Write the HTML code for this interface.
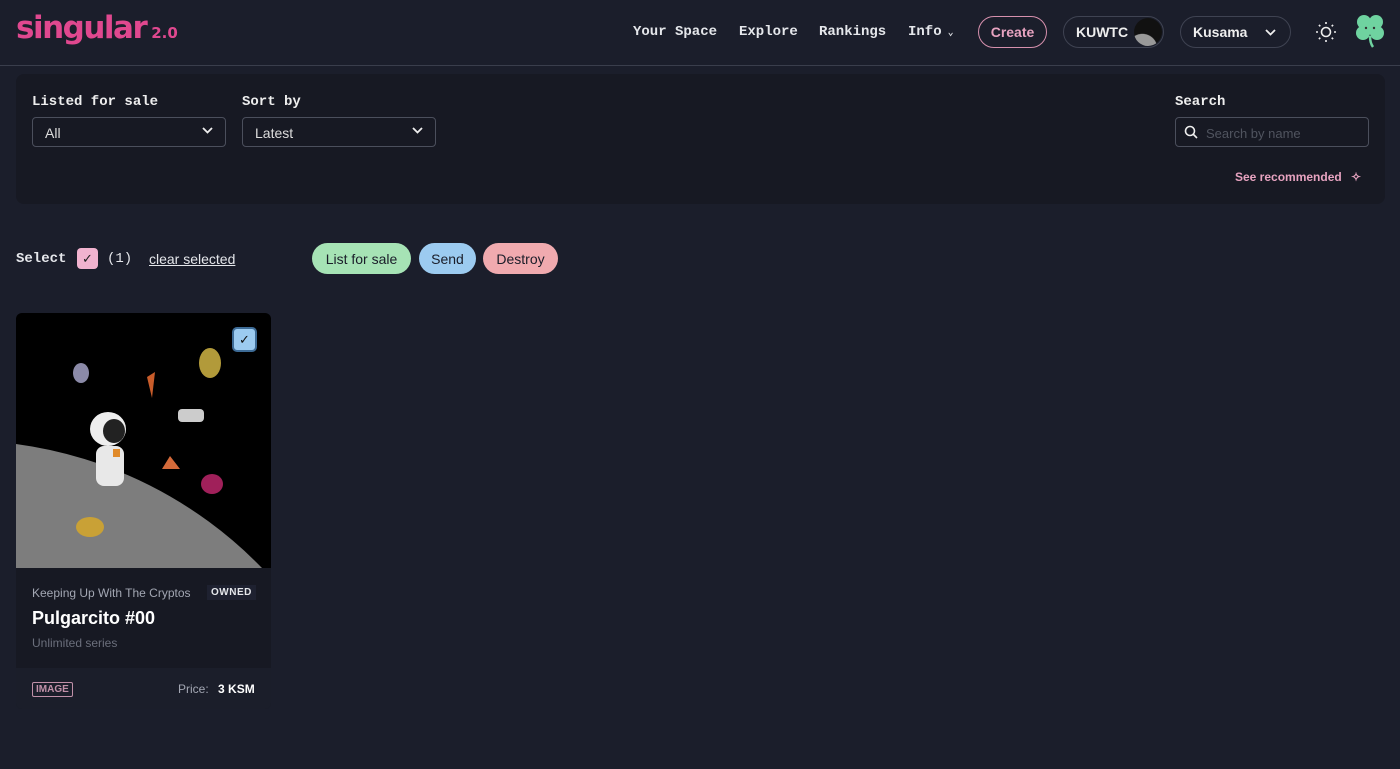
<!DOCTYPE html>
<html><head><meta charset="utf-8"><style>
*{box-sizing:border-box;margin:0;padding:0}
body{width:1400px;height:769px;background:#1b1e2b;font-family:"Liberation Sans",sans-serif;color:#e5e7eb;position:relative;overflow:hidden}
.mono{font-family:"Liberation Mono",monospace;font-weight:bold}
.hdr{position:absolute;left:0;top:0;width:1400px;height:66px;border-bottom:1px solid #3a3e4c}
.logo{position:absolute;left:16px;top:10px;font-family:"DejaVu Sans",sans-serif;font-weight:bold;color:#e0488f;font-size:31px;letter-spacing:-1.5px}
.logo small{font-size:15px;margin-left:5px;letter-spacing:0}
.nav{position:absolute;top:24px;font-size:14px;color:#e5e7eb}
.pill{position:absolute;border-radius:20px;height:32px;top:16px;font-size:14px;font-weight:bold;display:flex;align-items:center}
.panel{position:absolute;left:16px;top:74px;width:1369px;height:130px;background:#171923;border-radius:8px}
.lbl{position:absolute;top:94px;font-size:14px;color:#eee}
.sel{position:absolute;top:117px;height:30px;border:1px solid #4b4f5c;border-radius:4px;font-size:14px;padding:7px 12px;color:#ddd}
.chev{position:absolute;right:12px;top:9px}
.btn{position:absolute;top:243px;height:31px;border-radius:16px;color:#1a1d29;font-size:14px;display:flex;align-items:center;justify-content:center}
.card{position:absolute;left:16px;top:313px;width:255px;height:396px;background:#171923;border-radius:6px;overflow:hidden}
</style></head><body>
<div class="hdr">
<div class="logo">singular<small>2.0</small></div>
<div class="nav mono" style="left:633px">Your Space</div>
<div class="nav mono" style="left:739px">Explore</div>
<div class="nav mono" style="left:819px">Rankings</div>
<div class="nav mono" style="left:908px">Info<span style="font-size:10px"> ⌄</span></div>
<div class="pill" style="left:978px;width:69px;border:1.5px solid #d690ad;color:#e7a3c0;justify-content:center">Create</div>
<div class="pill" style="left:1063px;width:101px;border:1px solid #3f4352;color:#eee;padding-left:12px">KUWTC
<div style="position:absolute;right:1px;top:1px;width:28px;height:28px;border-radius:50%;background:radial-gradient(circle at 30% 110%,#999 40%,#111 42%)"></div></div>
<div class="pill" style="left:1180px;width:111px;border:1px solid #3f4352;color:#eee;padding-left:12px">Kusama
<svg style="position:absolute;right:14px;top:12px" width="11" height="7"><path d="M1 1l4.5 4.5L10 1" stroke="#eee" stroke-width="1.8" fill="none"/></svg></div>
<svg style="position:absolute;left:1315px;top:21px" width="22" height="22" viewBox="0 0 22 22" stroke="#eee" stroke-width="1.6" fill="none"><circle cx="11" cy="11" r="4.5"/><path d="M11 1v2M11 19v2M1 11h2M19 11h2M3.9 3.9l1.4 1.4M16.7 16.7l1.4 1.4M3.9 18.1l1.4-1.4M16.7 5.3l1.4-1.4"/></svg>
<svg style="position:absolute;left:1355px;top:14px" width="30" height="34" viewBox="0 0 30 34"><g fill="#6fd3a0"><circle cx="9" cy="8" r="7"/><circle cx="21" cy="8" r="7"/><circle cx="8" cy="19" r="7"/><circle cx="22" cy="19" r="7"/><rect x="8" y="8" width="14" height="12"/></g><path d="M15 22q0 7 3 11" stroke="#6fd3a0" stroke-width="2.5" fill="none"/><circle cx="11" cy="14" r="1.2" fill="#333"/><circle cx="19" cy="14" r="1.2" fill="#333"/></svg>
</div>
<div class="panel"></div>
<div class="lbl mono" style="left:32px">Listed for sale</div>
<div class="lbl mono" style="left:242px">Sort by</div>
<div class="lbl mono" style="left:1175px">Search</div>
<div class="sel" style="left:32px;width:194px">All<svg class="chev" width="11" height="7"><path d="M1 1l4.5 4.5L10 1" stroke="#eee" stroke-width="1.8" fill="none"/></svg></div>
<div class="sel" style="left:242px;width:194px">Latest<svg class="chev" width="11" height="7"><path d="M1 1l4.5 4.5L10 1" stroke="#eee" stroke-width="1.8" fill="none"/></svg></div>
<div class="sel" style="left:1175px;width:194px;padding-left:30px;color:#50545f;font-size:13px;padding-top:8px">Search by name
<svg style="position:absolute;left:8px;top:7px" width="14" height="14"><circle cx="6" cy="6" r="4.5" stroke="#eee" stroke-width="1.6" fill="none"/><path d="M9.5 9.5l3.5 3.5" stroke="#eee" stroke-width="1.6"/></svg></div>
<div style="position:absolute;left:1235px;top:170px;font-size:12px;font-weight:bold;color:#e7a3c0">See recommended <span style="margin-left:6px">✧</span></div>
<div class="mono" style="position:absolute;left:16px;top:251px;font-size:14px">Select</div>
<div style="position:absolute;left:77px;top:248px;width:21px;height:21px;border-radius:4px;background:#f1b3cf;color:#222;font-size:13px;text-align:center;line-height:21px">✓</div>
<div class="mono" style="position:absolute;left:107px;top:251px;font-size:14px;font-weight:normal">(1)</div>
<div style="position:absolute;left:149px;top:251px;font-size:14px;text-decoration:underline">clear selected</div>
<div class="btn" style="left:312px;width:99px;background:#a6e3b5">List for sale</div>
<div class="btn" style="left:419px;width:57px;background:#9ccbf0">Send</div>
<div class="btn" style="left:483px;width:75px;background:#f0aaaf">Destroy</div>
<div class="card">
<svg width="255" height="255" viewBox="0 0 255 255" style="display:block">
<rect width="255" height="255" fill="#000"/>
<path d="M0 131 A420 420 0 0 1 246 255 L0 255Z" fill="#7d7d7d"/>
<ellipse cx="65" cy="60" rx="8" ry="10" fill="#8b8aa8"/>
<ellipse cx="194" cy="50" rx="11" ry="15" fill="#b29a3a"/>
<path d="M131 64l8-5-3 26z" fill="#c85c2a"/>
<rect x="162" y="96" width="26" height="13" rx="4" fill="#ccc"/>
<path d="M146 156l8-13 10 13z" fill="#d46a3a"/>
<ellipse cx="196" cy="171" rx="11" ry="10" fill="#a0205a"/>
<ellipse cx="74" cy="214" rx="14" ry="10" fill="#c9a136"/>
<ellipse cx="92" cy="116" rx="18" ry="17" fill="#eee"/>
<ellipse cx="98" cy="118" rx="11" ry="12" fill="#222"/>
<rect x="80" y="133" width="28" height="40" rx="8" fill="#e8e8e8"/>
<rect x="97" y="136" width="7" height="8" fill="#e08a2a"/>
</svg>
<div style="position:absolute;left:216px;top:14px;width:25px;height:25px;border-radius:5px;background:#9ccbf0;border:2px solid #3d6b96;color:#111;font-size:13px;text-align:center;line-height:21px">✓</div>
<div style="position:absolute;left:16px;top:273px;font-size:12px;color:#a3a7b3">Keeping Up With The Cryptos</div>
<div style="position:absolute;left:191px;top:272px;font-size:10px;font-weight:bold;background:#1e2130;padding:2px 4px;letter-spacing:.5px">OWNED</div>
<div style="position:absolute;left:16px;top:295px;font-size:18px;font-weight:bold;color:#fff">Pulgarcito #00</div>
<div style="position:absolute;left:16px;top:323px;font-size:12px;color:#6b6f7c">Unlimited series</div>
<div style="position:absolute;left:0;top:355px;width:255px;height:41px;background:#1b1e2a"></div>
<div style="position:absolute;left:16px;top:369px;font-size:10px;font-weight:bold;color:#c090a8;border:1px solid #c090a8;padding:1px 3px;border-radius:2px">IMAGE</div>
<div style="position:absolute;left:162px;top:369px;font-size:12px;color:#a3a7b3">Price: <b style="color:#fff;margin-left:6px">3 KSM</b></div>
</div>
</body></html>
